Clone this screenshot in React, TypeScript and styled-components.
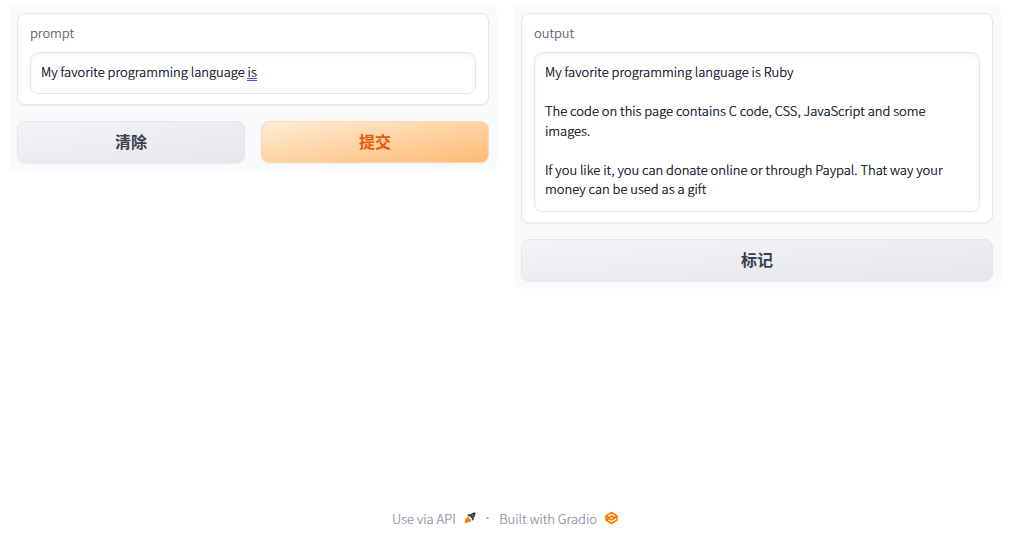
import React, { useState } from "react";
import styled, { createGlobalStyle } from "styled-components";

const GlobalStyle = createGlobalStyle`
  *, *::before, *::after { box-sizing: border-box; }
  body {
    margin: 0;
    background: #ffffff;
    color: #1f2937;
    font-family: "Noto Sans CJK SC", sans-serif;
    font-size: 13px;
    font-weight: 300;
    line-height: 1.5;
    text-shadow: 0 0 0 currentColor;
  }
`;

const Page = styled.div`
  display: flex;
  flex-direction: column;
  min-height: 100vh;
  padding: 5px 16px 14px 9px;
`;

const Columns = styled.main`
  display: flex;
  align-items: flex-start;
  gap: 16px;
`;

const Panel = styled.section`
  display: flex;
  flex: 1 1 0;
  flex-direction: column;
  gap: 16px;
  min-width: 0;
  padding: 8px;
  border-radius: 8px;
  background: #f9fafb;
`;

const Block = styled.div`
  padding: 9px 12px 10px;
  border: 1px solid #e5e7eb;
  border-radius: 8px;
  background: #ffffff;
  box-shadow: 0 1px 2px rgba(0, 0, 0, 0.05);
`;

const FieldLabel = styled.label`
  display: block;
  height: 20px;
  margin-bottom: 9px;
  color: #6b7280;
`;

const FieldBody = styled.div`
  position: relative;
`;

const TextBox = styled.textarea`
  display: block;
  width: 100%;
  padding: 9px 10px 11px;
  border: 1px solid #e5e7eb;
  border-radius: 8px;
  outline: none;
  background: #ffffff;
  box-shadow: inset 0 2px 4px rgba(0, 0, 0, 0.05);
  color: #1f2937;
  font: inherit;
  text-shadow: inherit;
  resize: none;
  overflow: hidden;
`;

const OutputBox = styled(TextBox)`
  min-height: 160px;
`;

const GrammarMark = styled.span`
  position: absolute;
  top: 26px;
  left: 217px;
  width: 10px;
  height: 3px;
  border-top: 1px solid #3b5bea;
  border-bottom: 1px solid #3b5bea;
  pointer-events: none;
`;

const ButtonRow = styled.div`
  display: flex;
  gap: 16px;
`;

const Button = styled.button<{ $primary?: boolean }>`
  flex: 1 1 0;
  height: 42px;
  padding: 0 16px 2px;
  border: 1px solid ${(p) => (p.$primary ? "#fed7aa" : "#e5e7eb")};
  border-radius: 8px;
  background: ${(p) =>
    p.$primary
      ? "linear-gradient(to bottom right, #ffedd5, #fdba74)"
      : "linear-gradient(to bottom right, #f3f4f6, #e5e7eb)"};
  box-shadow: 0 1px 2px rgba(0, 0, 0, 0.05);
  color: ${(p) => (p.$primary ? "#ea580c" : "#374151")};
  font: inherit;
  font-size: 16px;
  font-weight: 700;
  cursor: pointer;
`;

const Footer = styled.footer`
  display: flex;
  justify-content: center;
  align-items: center;
  gap: 10px;
  margin-top: auto;
  color: #9ca3af;
`;

const Separator = styled.span`
  font-family: "Noto Sans", sans-serif;
  font-weight: 400;
`;

const FooterLink = styled.a`
  display: flex;
  align-items: center;
  gap: 8px;
  color: inherit;
  text-decoration: none;
`;

const RocketIcon = () => (
  <svg width="12" height="12" viewBox="0 0 26 26" aria-hidden="true">
    <path d="M25 1C20 1 16 2 13 6L17 9L20 13C24 10 25 6 25 1Z" fill="#263244" />
    <path d="M14 5L9 5L7 9L12 9L17 14L17 19L21 17L21 12L17 9Z" fill="#334155" />
    <circle cx="19" cy="7" r="2" fill="#64748b" />
    <path d="M9 11L15 17L14 21L9 22L1 25L3 17L5 12Z" fill="#ff7c00" />
  </svg>
);

const GradioIcon = () => (
  <svg width="13" height="14" viewBox="0 0 26 28" fill="none" aria-hidden="true">
    <g stroke="#ff7c00" strokeWidth="3" strokeLinejoin="round" strokeLinecap="round">
      <path d="M2 10L13 3L24 10L18 13L13 10L2 17V10L8 13" />
      <path d="M24 11V18L13 25L2 18L8 15L13 18L24 11" />
    </g>
  </svg>
);

const OUTPUT = `My favorite programming language is Ruby

The code on this page contains C code, CSS, JavaScript and some images.

If you like it, you can donate online or through Paypal. That way your money can be used as a gift`;

const INITIAL_PROMPT = "My favorite programming language is";

export default function App() {
  const [prompt, setPrompt] = useState(INITIAL_PROMPT);

  return (
    <>
      <GlobalStyle />
      <Page>
        <Columns>
          <Panel>
            <Block>
              <FieldLabel htmlFor="prompt">prompt</FieldLabel>
              <FieldBody>
                <TextBox
                  id="prompt"
                  rows={1}
                  spellCheck={false}
                  value={prompt}
                  onChange={(e) => setPrompt(e.target.value)}
                />
                {prompt === INITIAL_PROMPT && <GrammarMark />}
              </FieldBody>
            </Block>
            <ButtonRow>
              <Button type="button" onClick={() => setPrompt("")}>清除</Button>
              <Button type="button" $primary>提交</Button>
            </ButtonRow>
          </Panel>
          <Panel>
            <Block>
              <FieldLabel htmlFor="output">output</FieldLabel>
              <FieldBody>
                <OutputBox id="output" rows={7} spellCheck={false} readOnly value={OUTPUT} />
              </FieldBody>
            </Block>
            <ButtonRow>
              <Button type="button">标记</Button>
            </ButtonRow>
          </Panel>
        </Columns>
        <Footer>
          <FooterLink href="#api">
            Use via API <RocketIcon />
          </FooterLink>
          <Separator>·</Separator>
          <FooterLink href="#gradio">
            Built with Gradio <GradioIcon />
          </FooterLink>
        </Footer>
      </Page>
    </>
  );
}
